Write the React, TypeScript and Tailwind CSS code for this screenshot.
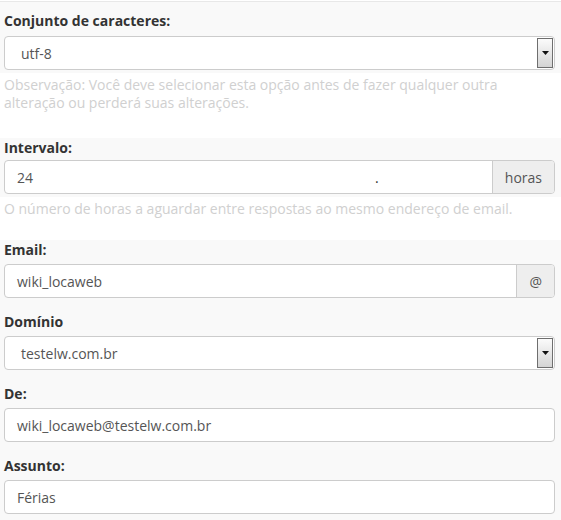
import type { ReactNode } from "react"

function Label({ children, className = "" }: { children: ReactNode; className?: string }) {
  return <div className={`h-5 leading-5 font-bold text-[#333] ${className}`}>{children}</div>
}

function Help({ children, className = "" }: { children: ReactNode; className?: string }) {
  return <p className={`px-1 pr-1.5 leading-[18px] text-[#d0d0d0] ${className}`}>{children}</p>
}

function Select({ value }: { value: string }) {
  return (
    <div className="flex h-[34px] items-stretch rounded border border-[#ccc] bg-white py-px pr-px">
      <span className="flex flex-1 items-center pl-[16px] text-[#555]">{value}</span>
      <span className="flex w-[16px] items-center justify-center border border-[#6e6e6e] bg-linear-to-b from-[#fbfbfb] to-[#d4d4d4]">
        <svg width="7" height="4" viewBox="0 0 7 4">
          <path d="M0 0h7L3.5 4z" fill="#111" />
        </svg>
      </span>
    </div>
  )
}

function Input({ children, addon }: { children: ReactNode; addon?: string }) {
  return (
    <div className="flex h-[34px] overflow-hidden rounded border border-[#ccc] bg-white text-[#555]">
      <div className="flex flex-1 items-center pl-[12px]">{children}</div>
      {addon && (
        <div className="flex items-center border-l border-[#ccc] bg-[#eee] px-3 text-[#555]">{addon}</div>
      )}
    </div>
  )
}

export default function App() {
  return (
    <div className="min-h-[520px] bg-white pt-px font-['Open_Sans',sans-serif] text-[14px]">
      {/* charset */}
      <div className="border-t border-[#e8e8e8] bg-[#f9f9f9] px-1 pr-1.5 pt-[9px] pb-[3px]">
        <Label className="mb-[5px]">Conjunto de caracteres:</Label>
        <Select value="utf-8" />
      </div>
      <Help className="mt-[3px] mb-[26px]">
        Observação: Você deve selecionar esta opção antes de fazer qualquer outra alteração ou perderá suas alterações.
      </Help>

      {/* interval */}
      <div className="bg-[#f9f9f9] px-1 pr-1.5 pb-[3px]">
        <Label className="mb-[2px]">Intervalo:</Label>
        <Input addon="horas">
          <span className="w-[358px]">24</span>
          <span className="text-[#333]">.</span>
        </Input>
      </div>
      <Help className="mt-[3px] mb-[22px]">O número de horas a aguardar entre respostas ao mesmo endereço de email.</Help>

      {/* message fields */}
      <div className="flex flex-col gap-[14px] bg-[#f9f9f9] px-1 pr-1.5 pb-2">
        <div>
          <Label className="mb-1">Email:</Label>
          <Input addon="@">wiki_locaweb</Input>
        </div>
        <div>
          <Label className="mb-1">Domínio</Label>
          <Select value="testelw.com.br" />
        </div>
        <div>
          <Label className="mb-1">De:</Label>
          <Input>wiki_locaweb@testelw.com.br</Input>
        </div>
        <div>
          <Label className="mb-1">Assunto:</Label>
          <Input>Férias</Input>
        </div>
      </div>
    </div>
  )
}
